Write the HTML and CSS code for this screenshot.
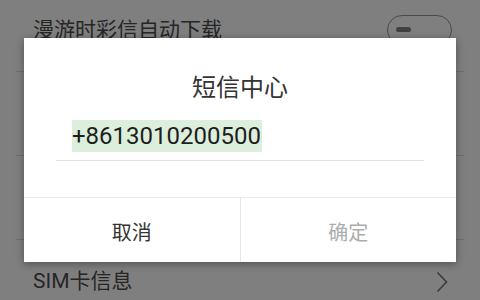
FILE: index.html
```html
<!DOCTYPE html>
<html>
<head>
<meta charset="utf-8">
<link rel="stylesheet" href="styles.css">
</head>
<body>
<div class="list">
  <div class="row first">
    <span class="label">漫游时彩信自动下载</span>
    <span class="toggle"><span class="knob"></span></span>
  </div>
  <div class="row"><span class="label"></span></div>
  <div class="row"><span class="label"></span></div>
  <div class="row last">
    <span class="label">SIM卡信息</span>
    <svg class="chev" width="12" height="22" viewBox="0 0 12 22"><path d="M1.5 1.5 L10.5 11 L1.5 20.5" fill="none" stroke="#3c3c3c" stroke-width="1.6"/></svg>
  </div>
</div>
<div class="dialog">
  <div class="title">短信中心</div>
  <div class="field"><span class="value">+8613010200500</span></div>
  <div class="buttons">
    <div class="btn cancel">取消</div>
    <div class="btn ok">确定</div>
  </div>
</div>
</body>
</html>
```
FILE: styles.css
```css
html, body {
  margin: 0;
  padding: 0;
}
body {
  width: 480px;
  height: 300px;
  overflow: hidden;
  background: #7f7f7f;
  font-family: "Roboto", "Noto Sans CJK SC", sans-serif;
  position: relative;
}
.list {
  display: flex;
  flex-direction: column;
  margin-top: -12px;
}
.row {
  height: 84px;
  margin: 0 16px;
  border-bottom: 1px solid #6f6f6f;
  display: flex;
  align-items: center;
  justify-content: space-between;
  padding: 0 16px 0 17px;
  box-sizing: border-box;
}
.row.first {
  padding-right: 12px;
}
.row.last {
  height: 59px;
  border-bottom: none;
  align-items: flex-start;
  padding-top: 26px;
}
.row.last .chev {
  margin-top: 5px;
}
.label {
  font-size: 21px;
  line-height: 30px;
  color: #262626;
}
.toggle {
  width: 65px;
  height: 30px;
  box-sizing: border-box;
  border: 1.5px solid #4a4a4a;
  border-radius: 15px;
  display: flex;
  align-items: center;
  padding-left: 8px;
}
.knob {
  width: 15px;
  height: 5px;
  border-radius: 3px;
  background: #404040;
}
.dialog {
  position: absolute;
  left: 24px;
  top: 38px;
  width: 432px;
  height: 224px;
  background: #fff;
  box-shadow: 0 2px 8px rgba(0,0,0,0.35);
  display: flex;
  flex-direction: column;
}
.title {
  padding-top: 38px;
  line-height: 24px;
  font-size: 24px;
  text-align: center;
  color: #333;
}
.field {
  margin: 20px 32px 0;
  padding: 0 0 8px 16px;
  border-bottom: 1px solid #e2e2e2;
  display: flex;
}
.value {
  font-size: 24px;
  line-height: 32px;
  height: 32px;
  background: #dcefdc;
  color: #1e1e1e;
  padding-right: 1px;
}
.buttons {
  margin-top: auto;
  height: 64px;
  border-top: 1px solid #e8e8e8;
  display: flex;
}
.btn {
  flex: 1;
  display: flex;
  align-items: center;
  justify-content: center;
  font-size: 20px;
  padding-top: 2px;
  box-sizing: border-box;
}
.cancel {
  color: #333;
  border-right: 1px solid #e8e8e8;
}
.ok {
  color: #adadad;
}
```
